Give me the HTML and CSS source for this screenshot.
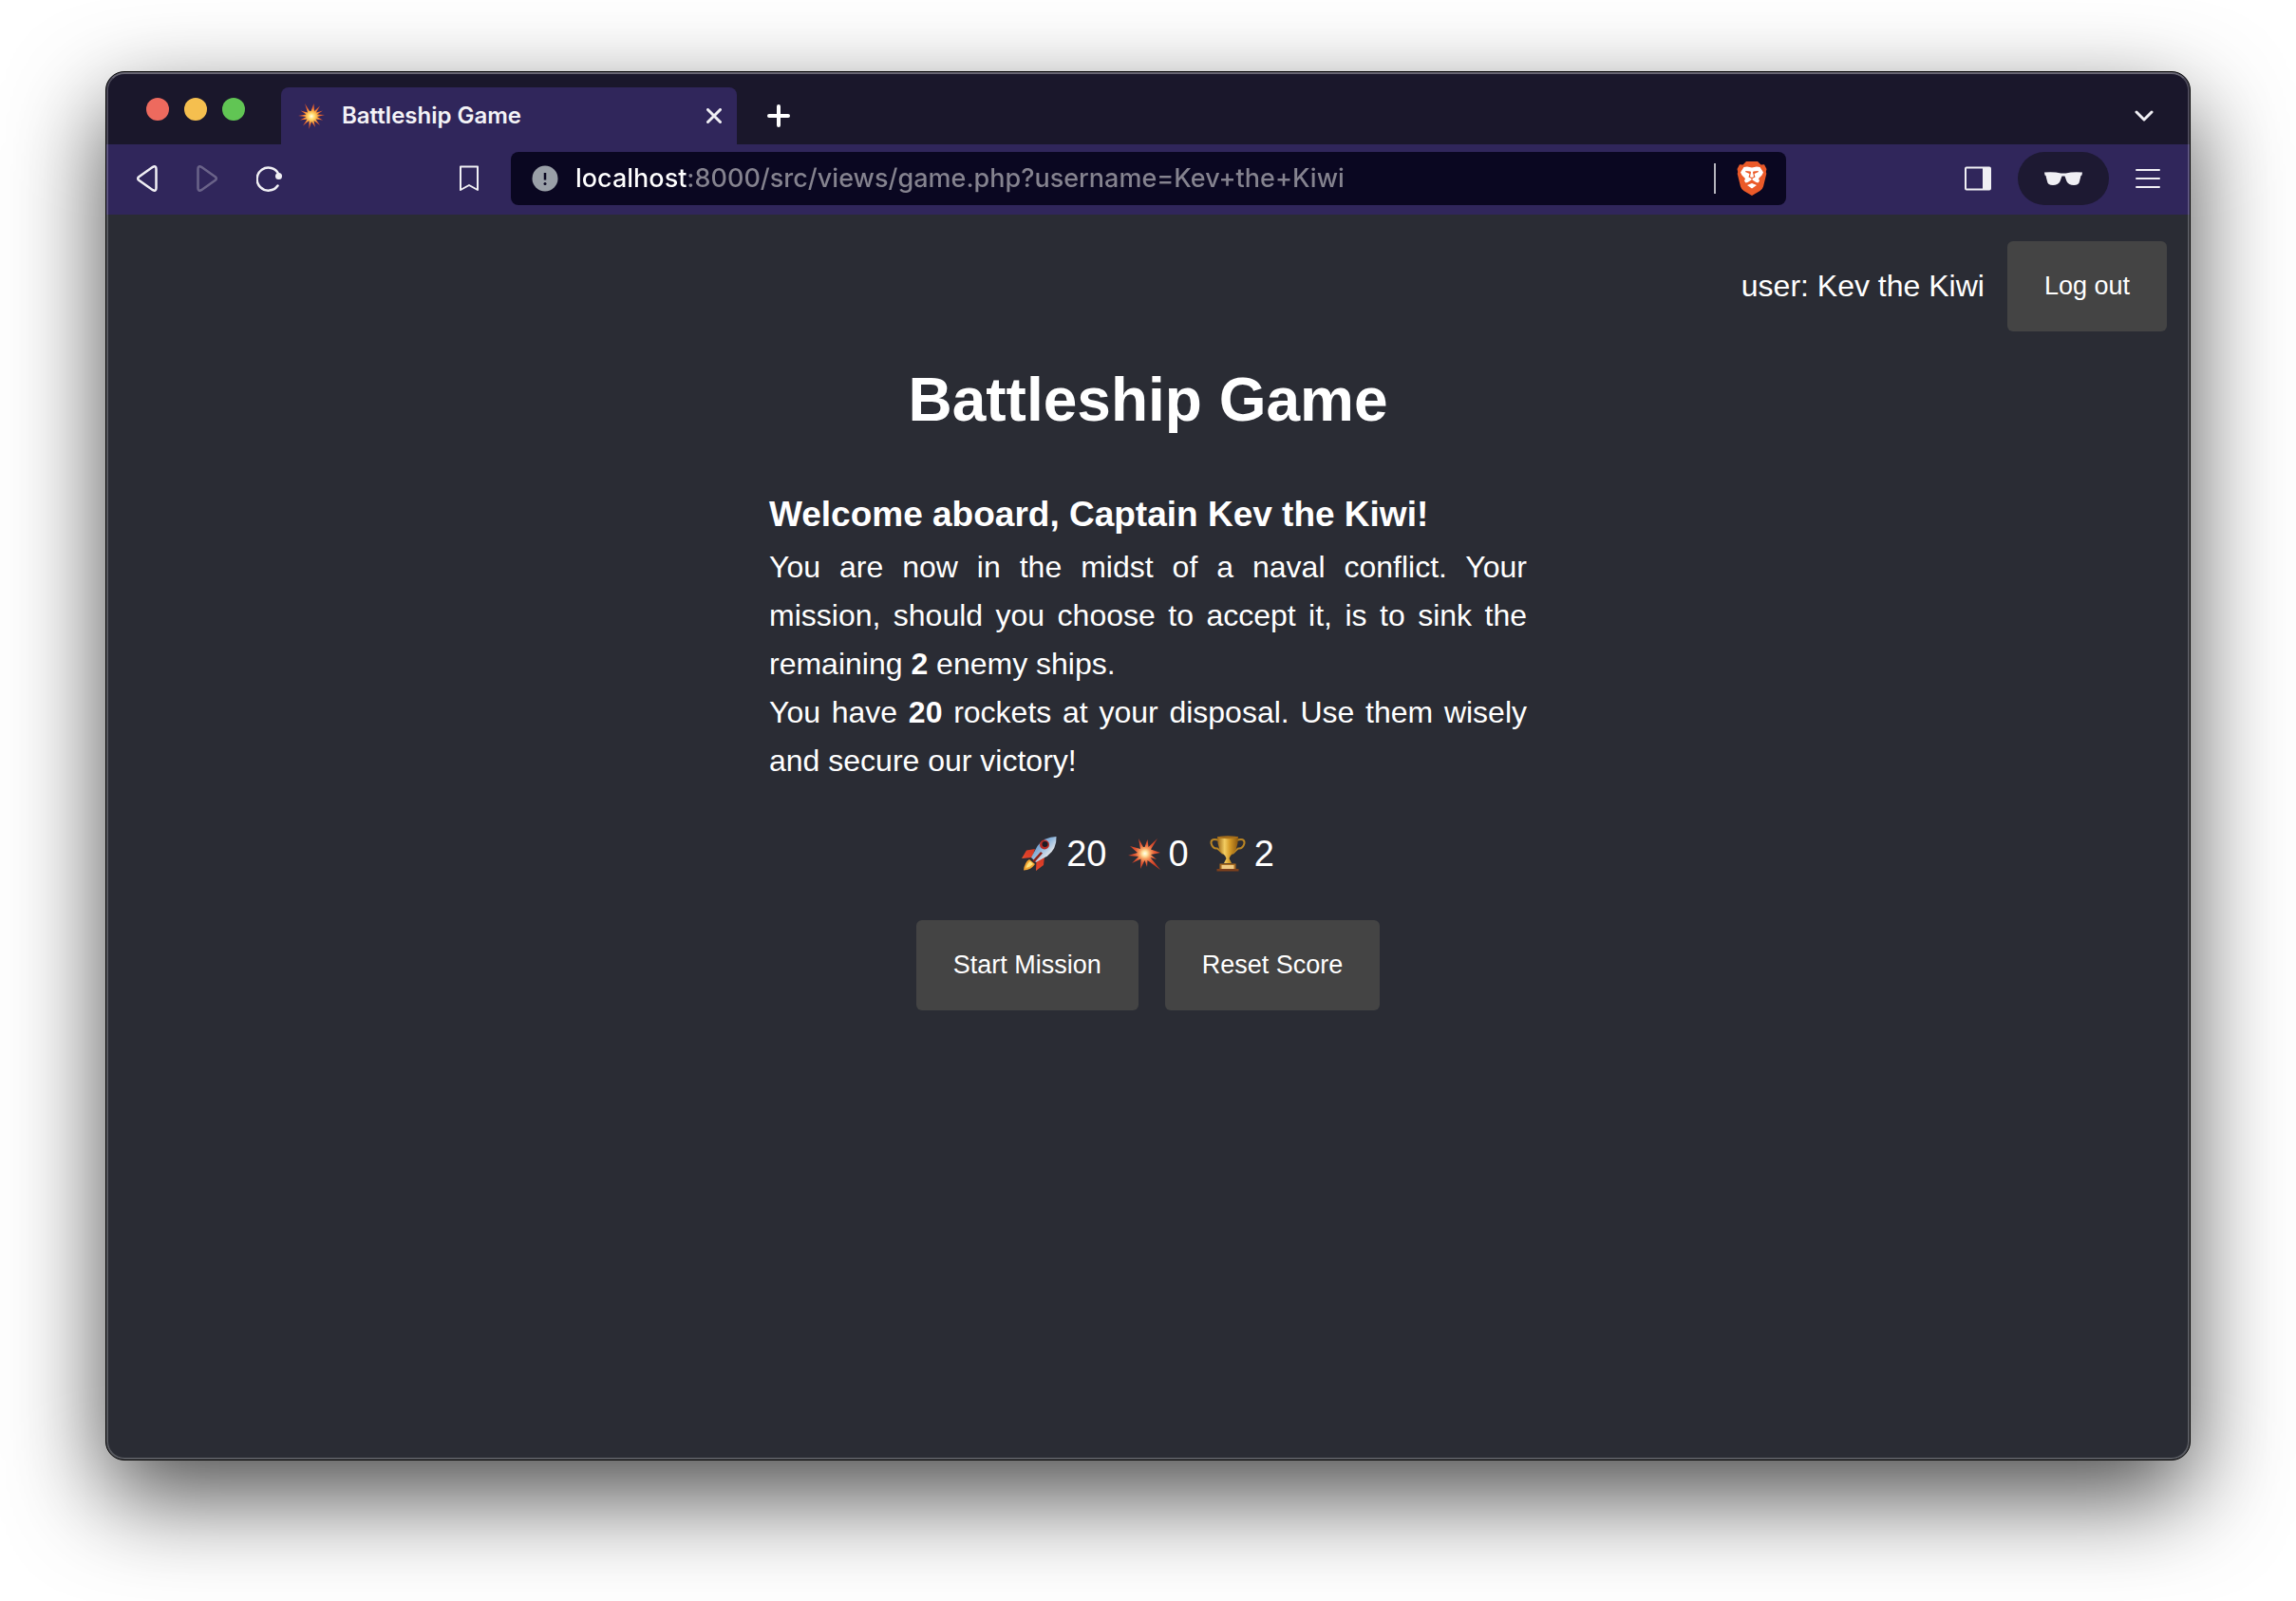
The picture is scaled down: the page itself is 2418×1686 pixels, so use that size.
FILE: index.html
```html
<!DOCTYPE html>
<html lang="en">
<head>
<meta charset="utf-8">
<title>Battleship Game</title>
<link rel="stylesheet" href="styles.css">
</head>
<body>
<svg class="defs" aria-hidden="true">
  <defs>
    <radialGradient id="burst" cx="52%" cy="48%" r="50%">
      <stop offset="0" stop-color="#fffdf0"/><stop offset=".15" stop-color="#ffe9a8"/><stop offset=".35" stop-color="#f7a060"/><stop offset=".6" stop-color="#e45a35"/><stop offset="1" stop-color="#c93a22"/>
    </radialGradient>
    <radialGradient id="spark" cx="50%" cy="50%" r="50%">
      <stop offset="0" stop-color="#fffdf0"/><stop offset=".2" stop-color="#ffe27a"/><stop offset=".45" stop-color="#f9a840"/><stop offset=".65" stop-color="#ee6a30"/><stop offset="1" stop-color="#dc4f2a"/>
    </radialGradient>
    <linearGradient id="hull" x1="0" y1="0" x2="1" y2="1">
      <stop offset="0" stop-color="#3f78ba"/><stop offset=".45" stop-color="#8fb6dc"/><stop offset=".7" stop-color="#dfe4ea"/><stop offset="1" stop-color="#5f6e80"/>
    </linearGradient>
    <linearGradient id="fin" x1="1" y1="0" x2="0" y2="1">
      <stop offset="0" stop-color="#c8301f"/><stop offset=".6" stop-color="#e2442b"/><stop offset="1" stop-color="#f4a040"/>
    </linearGradient>
    <linearGradient id="gold">
      <stop offset="0" stop-color="#9a6412"/><stop offset=".35" stop-color="#f3cd62"/><stop offset=".6" stop-color="#d59a26"/><stop offset="1" stop-color="#8a5710"/>
    </linearGradient>
  </defs>
</svg>
<div class="window">
  <div class="tabstrip">
    <div class="lights"><span class="light red"></span><span class="light amber"></span><span class="light green"></span></div>
    <div class="tab">
      <svg class="favicon" viewBox="0 0 28 28"><path fill="url(#spark)" d="M13.500 9 16.500 1 17 9 23 3.500 19 10.500 26 8.500 20 12.500 28 13 20 15 26 18.500 18.500 17.500 23 24 16.500 19 18 26 14 20 11.500 28 11.500 19 5 24.500 9.500 17.500 2 18.500 8.500 15 0 14 8.500 12.500 2.500 8.500 10 10.500 7 1 12 9Z"/></svg>
      <span class="tab-title">Battleship Game</span>
      <button class="icon-btn close" aria-label="Close tab"><svg width="16" height="16" viewBox="0 0 16 16"><path class="line thick" d="M1.500 1.500 14.500 14.500M14.500 1.500 1.500 14.500"/></svg></button>
    </div>
    <button class="icon-btn new-tab" aria-label="New tab"><svg width="24" height="24" viewBox="0 0 24 24"><path class="line plus" d="M12 2V22M2 12H22"/></svg></button>
    <button class="icon-btn tab-search" aria-label="Search tabs"><svg width="20" height="12" viewBox="0 0 20 12"><path class="line thick" d="M2 2 10 10 18 2"/></svg></button>
  </div>
  <div class="toolbar">
    <div class="nav">
      <button class="icon-btn" aria-label="Back"><svg width="22" height="28" viewBox="0 0 22 28"><path class="line bold" d="M17 1.800 2.200 12.200Q.2 14 2.200 15.800L17 26.200Q20.500 28 20.500 24V4Q20.500 0 17 1.800Z"/></svg></button>
      <button class="icon-btn dim" aria-label="Forward" disabled><svg width="22" height="28" viewBox="0 0 22 28"><path class="line bold" d="M5 1.800 19.800 12.200Q21.800 14 19.800 15.800L5 26.200Q1.500 28 1.500 24V4Q1.500 0 5 1.800Z"/></svg></button>
      <button class="icon-btn" aria-label="Reload"><svg width="28" height="28" viewBox="0 0 28 28"><path class="line bold" d="M23.500 9.500A12 12 0 1 0 22.500 21.500"/><circle cx="23.500" cy="11.500" r="3.500" fill="#f0eff4"/></svg></button>
    </div>
    <button class="icon-btn bookmark" aria-label="Bookmark"><svg width="20" height="28" viewBox="0 0 20 28"><path class="line" d="M1 1.500H19V26L10 21 1 26Z"/></svg></button>
    <div class="address">
      <svg class="info" width="28" height="28" viewBox="0 0 28 28"><circle cx="14" cy="14" r="13.500" fill="#9aa0a8"/><path d="M14 8V15.500" stroke="#0a0721" stroke-width="2.500"/><circle cx="14" cy="19.500" r="1.500" fill="#0a0721"/></svg>
      <input class="url" type="text" aria-label="Address" value="localhost:8000/src/views/game.php?username=Kev+the+Kiwi">
      <span class="divider"></span>
      <button class="icon-btn" aria-label="Brave Shields"><svg width="32" height="36" viewBox="0 0 32 36"><path fill="#eb5a29" d="M10 0H22L25.500 3.500 29 3.200 31.500 8 30.800 11 31.300 13 28 26.500Q27 29.500 24.500 31L16 36 7.500 31Q5 29.500 4 26.500L.7 13 1.200 11 .5 8 3 3.200 6.500 3.500Z"/><path fill="#fff" d="M7.500 6 11 5.500 16 6.500 21 5.500 24.500 6 28 11.500 26.500 14.500 23 18 24 20.500 22.500 22.500 20.500 22 16.500 19.500V18L19.500 16.500 18.500 13 23 11 22.500 10 17.500 10.500 17 11.500 18 16 16 17 14 16 15 11.500 14.500 10.500 9.500 10 9 11 13.500 13 12.500 16.500 15.500 18V19.500L11.500 22 9.500 22.500 8 20.500 9 18 5.500 14.500 4 11.500ZM16 23 21 25 16 28.500 11 25Z"/></svg></button>
    </div>
    <div class="tools">
      <button class="icon-btn" aria-label="Sidebar"><svg width="28" height="26" viewBox="0 0 28 26"><rect class="line" x="1" y="1.500" width="26" height="23" rx="1"/><path d="M19 1H27V25H19Z" fill="#f0eff4"/></svg></button>
      <button class="private" aria-label="Private window"><svg width="40" height="14" viewBox="0 0 40 14"><path fill="#f0eff4" d="M0 .5Q10-.5 17.500 1.500H22.500Q30-.5 40 .5L39.500 3.500 38.500 4 37 10Q36.500 14 31 14 25.500 14 23.500 10L21.500 4.500H18.500L16.500 10Q14.500 14 9 14 3.500 14 3 10L1.500 4 .5 3.500Z"/></svg></button>
      <button class="icon-btn" aria-label="Menu"><svg width="26" height="20" viewBox="0 0 26 20"><path class="line" d="M1 1H25M1 10H25M1 19H25"/></svg></button>
    </div>
  </div>
  <div class="page">
    <header class="userbar">
      <span>user: Kev the Kiwi</span>
      <button class="btn">Log out</button>
    </header>
    <main class="game">
      <h1>Battleship Game</h1>
      <section class="briefing">
        <h3>Welcome aboard, Captain Kev the Kiwi!</h3>
        <p>You are now in the midst of a naval conflict. Your mission, should you choose to accept it, is to sink the remaining <b>2</b> enemy ships.</p>
        <p>You have <b>20</b> rockets at your disposal. Use them wisely and secure our victory!</p>
      </section>
      <div class="stats">
        <span class="stat"><svg width="38" height="38" viewBox="0 0 38 38"><path fill="url(#fin)" d="M14 14 5 15.500 0 24 11 23ZM24 22 23 31 15 37 15.500 27Z"/><path fill="#f2a431" d="M8 25Q3 28 2 36.500 10 36 14 30Z"/><path fill="#ffe37a" d="M9 27Q5 30 4.500 34 9 33 12 30Z"/><path fill="url(#hull)" d="M36.500 1Q24 1 16.500 11L10 23 15 28 27 21.500Q37 14 36.500 1Z"/><path fill="#8a2118" d="M11.500 26.500 20 17 22 18.500 13.500 28Z"/><circle cx="24" cy="9.500" r="5" fill="#b62a25"/><circle cx="24.500" cy="9" r="3" fill="#1d1b25"/></svg>20</span>
        <span class="stat"><svg width="34" height="36" viewBox="0 0 34 36"><path fill="url(#burst)" d="M17.500 11 20.500 3 21.500 11 31 2 24 13.500 34 17 24 19 30 24 23.500 22 34 35 20.500 25 20 32 17.500 25 13 34 13.500 23.500 4 28 11 21 0 20 10 17 2 10 13 13 11 2 16 11Z"/></svg>0</span>
        <span class="stat"><svg width="38" height="38" viewBox="0 0 38 38"><path fill="none" stroke="#b98524" stroke-width="2" d="M10 5Q1 2 1.500 8 3 14 8 13.500 10 15 14 19M28 5Q37 2 36.500 8 35 14 30 13.500 28 15 24 19"/><path fill="url(#gold)" d="M8 1H30Q30 16 22 21L20.500 24 23 29H15L17.500 24 16 21Q8 16 8 1Z"/><ellipse cx="19" cy="1.800" rx="11" ry="1.500" fill="#a8701a"/><path fill="#a96a20" d="M10.500 29.500H27.500V35H10.500Z"/><path fill="#f0cb84" d="M12.500 31H25.500V35H12.500Z"/><path fill="#7c3f1c" d="M7.500 35H30.500V37.500H7.500Z"/></svg>2</span>
      </div>
      <div class="actions"><button class="btn">Start Mission</button><button class="btn">Reset Score</button></div>
    </main>
  </div>
</div>
</body>
</html>
```
FILE: styles.css
```css
* { box-sizing: border-box; }
body {
  margin: 0;
  min-height: 100vh;
  padding: 75px 111px 148px;
  display: flex;
  background: #fff;
  color: #fff;
  font-family: "Liberation Sans", Arial, sans-serif;
  font-size: 32px;
}
.defs { position: absolute; width: 0; height: 0; }
button { border: 0; color: inherit; font-family: inherit; cursor: pointer; }
svg { display: block; flex: none; }
.window {
  flex: 1;
  min-width: 0;
  display: flex;
  flex-direction: column;
  position: relative;
  overflow: hidden;
  border: 1px solid #000;
  border-radius: 20px;
  background: #2a2c34;
  box-shadow: 0 38px 100px rgba(0, 0, 0, .7);
}
.window::after {
  content: "";
  position: absolute;
  inset: 0;
  border: 2px solid rgba(255, 255, 255, .22);
  border-top-color: rgba(255, 255, 255, .34);
  border-radius: 19px;
  pointer-events: none;
}
.line { fill: none; stroke: #f0eff4; stroke-width: 2; stroke-linecap: round; stroke-linejoin: round; }
.bold { stroke-width: 2.5; }
.thick { stroke-width: 3; }
.plus { stroke: #fff; stroke-width: 4; }
.icon-btn { padding: 0; background: none; display: flex; }
.dim { opacity: .3; }

.tabstrip { height: 76px; display: flex; align-items: flex-end; background: #1a172b; padding: 0 38px 0 42px; }
.lights { display: flex; gap: 16px; width: 142px; padding-bottom: 25px; }
.light { width: 24px; height: 24px; border-radius: 50%; }
.red { background: #ed6a5e; }
.amber { background: #f5bf4f; }
.green { background: #61c554; }
.tab {
  width: 480px;
  height: 60px;
  display: flex;
  align-items: center;
  padding: 0 16px 0 18px;
  border-radius: 8px 8px 0 0;
  background: #30265b;
}
.favicon { width: 28px; height: 28px; }
.tab-title { flex: 1; margin-left: 18px; font: 600 24px/32px Inter, sans-serif; color: #f4f3f7; }
.new-tab { margin: 0 auto 18px 32px; }
.tab-search { margin-bottom: 24px; }

.toolbar { height: 74px; display: flex; align-items: center; padding: 0 31px 2px 32px; background: #30265b; }
.nav { display: flex; align-items: center; gap: 41px; }
.bookmark { margin-left: 186px; }
.address {
  flex: 1;
  height: 56px;
  min-width: 0;
  display: flex;
  align-items: center;
  margin: 0 188px 0 34px;
  padding: 0 20px 0 22px;
  border-radius: 8px;
  background: #0a0721;
}
.url {
  flex: 1;
  min-width: 0;
  height: 40px;
  margin-left: 18px;
  padding: 0;
  border: 0;
  outline: 0;
  font: 500 27px/40px Inter, sans-serif;
  color: transparent;
  background: linear-gradient(to right, #fff 117px, #85838f 117px);
  -webkit-background-clip: text;
  background-clip: text;
}
.divider { width: 2px; height: 32px; margin-right: 22px; background: #b5b4bd; }
.tools { display: flex; align-items: center; gap: 28px; }
.private { width: 96px; height: 56px; padding: 0; border-radius: 28px; background: #1d1932; display: grid; place-items: center; }

.page { flex: 1; padding: 28px 24px; }
.userbar { display: flex; justify-content: flex-end; align-items: center; gap: 24px; }
.btn { height: 95px; padding: 0 39px; border-radius: 6px; background: #444; font-size: 27px; }
.game { max-width: 798px; margin: 21px auto 0; }
h1 { margin: 0 0 40px; font-size: 64px; line-height: 102px; text-align: center; }
h3 { margin: 0; font-size: 37px; line-height: 60px; }
p { margin: 0; line-height: 51px; text-align: justify; }
.stats { display: flex; justify-content: center; gap: 22px; margin-top: 42px; font-size: 38px; line-height: 60px; }
.stat { display: flex; align-items: center; gap: 9px; }
.actions { display: flex; justify-content: center; gap: 28px; margin-top: 40px; }
```
